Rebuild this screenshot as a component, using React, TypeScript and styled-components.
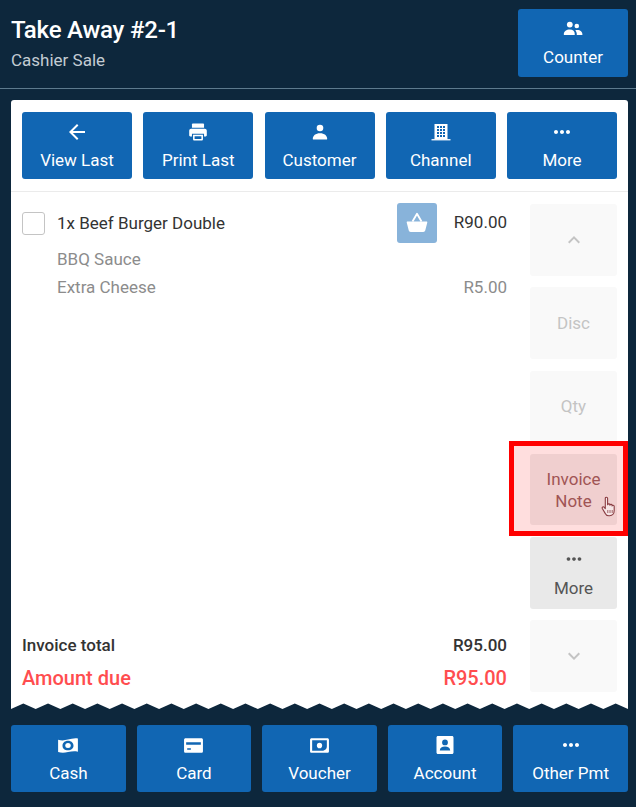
import type { ReactNode } from 'react';
import styled, { createGlobalStyle } from 'styled-components';
import { MdArrowBack, MdMoreHoriz, MdKeyboardArrowUp, MdKeyboardArrowDown } from 'react-icons/md';

const GlobalStyle = createGlobalStyle`
  html, body {
    margin: 0;
    padding: 0;
    background: #0d273c;
  }
  * {
    box-sizing: border-box;
  }
`;

const PeopleIcon = () => (
  <svg width="20" height="20" viewBox="0 0 20 20" fill="currentColor">
    <circle cx="6.8" cy="5.6" r="2.9" />
    <circle cx="13.8" cy="7" r="2.3" />
    <path d="M.8 15.4c0-3 2.700-4.900 6-4.900s5 1.900 5 4.900c0 .4-.3.6-.6.6H1.400c-.3 0-.6-.2-.6-.6z" />
    <path d="M13 16h6c.3 0 .5-.2.5-.5 0-2.700-2.100-4.600-5.100-4.600-.8 0-1.500.2-2.100.4 1 1.100 1.500 2.600 1.500 4.200 0 .2 0 .3-.1.5z" />
  </svg>
);

const PrintIcon = () => (
  <svg width="22" height="22" viewBox="0 0 20 20" fill="currentColor">
    <path d="M5.500 2.200h9c.6 0 1 .4 1 1v2.900h-11V3.200c0-.6.400-1 1-1z" />
    <path d="M3.800 7h12.400c1 0 1.800.8 1.800 1.800v4.200c0 .6-.4 1-1 1h-1.500v-2.500h-11V14H3c-.6 0-1-.4-1-1V8.800C2 7.800 2.800 7 3.800 7z" />
    <path fillRule="evenodd" d="M5.500 12.500h9v4c0 .7-.5 1.200-1.200 1.200H6.700c-.7 0-1.200-.5-1.200-1.200v-4zm1.400 1.300v2.600h6.200v-2.600H6.900z" />
  </svg>
);

const PersonIcon = () => (
  <svg width="20" height="20" viewBox="0 0 20 20" fill="currentColor">
    <circle cx="10" cy="6" r="3.300" />
    <path d="M2.800 17c0-3.400 2.800-5.800 7.200-5.800s7.200 2.400 7.200 5.800c0 .4-.3.600-.6.600H3.400c-.3 0-.6-.2-.6-.6z" />
  </svg>
);

const windowColumns = [6, 9, 12];
const windowRows = [4, 7, 10, 13];

const BuildingIcon = () => (
  <svg width="20" height="20" viewBox="0 0 20 20" fill="currentColor">
    <path d="M.5 17.100h19v1.300H.5z" />
    <path d="M3.500 2h13v15.500h-13z" />
    {windowRows.map((y) =>
      windowColumns.map((x) => <rect key={`${x}-${y}`} x={x} y={y} width="2" height="2" fill="#1166b3" />),
    )}
  </svg>
);

const CashIcon = () => (
  <svg width="22" height="22" viewBox="0 0 20 20" fill="currentColor" fillRule="evenodd">
    <path d="M1 5.200c3 .9 5.500.8 9-.1 3-.8 6-1.500 9-1v12c-3-.7-5.500-.4-9 .3-3.300.7-6.200.8-9-.1V5.200zm9 .9c-3 0-5 2-5 4.500s2 4.200 5 4.200 5-1.800 5-4.200-2-4.500-5-4.500z" />
    <ellipse cx="10" cy="10.500" rx="2.500" ry="2.300" />
  </svg>
);

const CardIcon = () => (
  <svg width="21" height="21" viewBox="0 0 20 20" fill="currentColor" fillRule="evenodd">
    <path d="M2.500 3h15C18.400 3 19 3.600 19 4.500v11c0 .9-.6 1.500-1.500 1.500h-15C1.600 17 1 16.400 1 15.500v-11C1 3.600 1.600 3 2.500 3zM3 7v2.300h14V7H3zm1 5.600v1.400h3.500v-1.400H4z" />
  </svg>
);

const VoucherIcon = () => (
  <svg width="21" height="21" viewBox="0 0 20 20" fill="currentColor" fillRule="evenodd">
    <path d="M2.500 3h15c.9 0 1.500.6 1.500 1.500v11c0 .9-.6 1.500-1.500 1.500h-15C1.600 17 1 16.400 1 15.500v-11C1 3.600 1.600 3 2.500 3zM3 5v10h10.500c2.200-.5 3.500-2 3.500-4V5H3z" />
    <ellipse cx="10" cy="10" rx="2.500" ry="2.700" />
  </svg>
);

const AccountIcon = () => (
  <svg width="20" height="20" viewBox="0 0 20 20" fill="currentColor" fillRule="evenodd">
    <path d="M3 1h14c.9 0 1.500.6 1.500 1.500v15c0 .9-.6 1.500-1.500 1.500H3c-.9 0-1.500-.6-1.500-1.500v-15C1.500 1.600 2.100 1 3 1zm7 3.500a2.900 2.900 0 100 5.800 2.900 2.900 0 000-5.800zM4.800 15.500h10.400c0-2.500-2.200-3.900-5.200-3.900s-5.200 1.400-5.200 3.900z" />
  </svg>
);

const BasketIcon = () => (
  <svg width="24" height="24" viewBox="0 0 24 24" fill="#fff">
    <path d="M2.500 10.500h19c.6 0 .9.500.8 1l-2 7.800c-.3 1-1 1.600-2 1.600H5.700c-1 0-1.700-.6-2-1.600l-2-7.800c-.1-.5.2-1 .8-1z" />
    <path d="M7.500 10.500L12 2.800l4.500 7.700" fill="none" stroke="#fff" strokeWidth="1.800" strokeLinejoin="round" />
  </svg>
);

const HandCursor = () => (
  <svg width="16" height="22" viewBox="0 0 16 22" fill="#f6e6e6" stroke="#8a3c42" strokeWidth="1.100" strokeLinejoin="round">
    <path d="M4.300 2.300c0-1.500 2.300-1.500 2.300 0v6.500c.1-1.300 2.200-1.300 2.300 0v.5c.1-1.200 2.100-1.200 2.200 0v.7c.2-1.100 2-1 2.100.2v4.400c0 2.700-1.600 5.200-4.600 5.200H7.800c-1.800 0-2.900-1-3.600-2.400L1.300 12.500c-.6-1.300 1.100-2.300 2-1.200l1 1.300V2.300z" />
    <path d="M6.800 14v3M9 14v3M11.200 14v3" fill="none" strokeWidth="0.800" />
  </svg>
);

function ActionButton({ icon, label }: { icon: ReactNode; label: string }) {
  return (
    <BlueButton>
      <IconSlot>{icon}</IconSlot>
      <span>{label}</span>
    </BlueButton>
  );
}

const receiptWidth = 617;
const teeth = 25;
const toothWidth = receiptWidth / teeth;
const zigzagPath =
  `M0 0 L${receiptWidth} 0 ` +
  Array.from({ length: teeth }, (_, i) => {
    const right = receiptWidth - i * toothWidth;
    return `L${right} 6 L${right - toothWidth / 2} 0.5`;
  }).join(' ') +
  ' L0 6 Z';

export default function App() {
  return (
    <Page>
      <GlobalStyle />
      <Header>
        <div>
          <Title>Take Away #2-1</Title>
          <Subtitle>Cashier Sale</Subtitle>
        </div>
        <CounterButton>
          <IconSlot><PeopleIcon /></IconSlot>
          <span>Counter</span>
        </CounterButton>
      </Header>

      <Card>
        <Toolbar>
          <ActionButton icon={<MdArrowBack size={24} />} label="View Last" />
          <ActionButton icon={<PrintIcon />} label="Print Last" />
          <ActionButton icon={<PersonIcon />} label="Customer" />
          <ActionButton icon={<BuildingIcon />} label="Channel" />
          <ActionButton icon={<MdMoreHoriz size={24} />} label="More" />
        </Toolbar>

        <Body>
          <Invoice>
            <ItemRow>
              <Checkbox />
              <ItemName>1x Beef Burger Double</ItemName>
              <BasketButton><BasketIcon /></BasketButton>
              <ItemPrice>R90.00</ItemPrice>
            </ItemRow>
            <Modifier><span>BBQ Sauce</span></Modifier>
            <Modifier><span>Extra Cheese</span><span>R5.00</span></Modifier>
            <Totals>
              <TotalRow><span>Invoice total</span><span>R95.00</span></TotalRow>
              <DueRow><span>Amount due</span><span>R95.00</span></DueRow>
            </Totals>
          </Invoice>

          <SideColumn>
            <SideButton><MdKeyboardArrowUp size={24} /></SideButton>
            <SideButton>Disc</SideButton>
            <SideButton>Qty</SideButton>
            <SideButton $active>
              Invoice<br />Note
              <Highlight />
              <CursorSpot><HandCursor /></CursorSpot>
            </SideButton>
            <SideButton $dark>
              <MdMoreHoriz size={22} />
              <MoreLabel>More</MoreLabel>
            </SideButton>
            <SideButton><MdKeyboardArrowDown size={24} /></SideButton>
          </SideColumn>
        </Body>
      </Card>
      <Zigzag viewBox={`0 0 ${receiptWidth} 6`} preserveAspectRatio="none">
        <path d={zigzagPath} fill="#fff" />
      </Zigzag>

      <PaymentBar>
        <ActionButton icon={<CashIcon />} label="Cash" />
        <ActionButton icon={<CardIcon />} label="Card" />
        <ActionButton icon={<VoucherIcon />} label="Voucher" />
        <ActionButton icon={<AccountIcon />} label="Account" />
        <ActionButton icon={<MdMoreHoriz size={24} />} label="Other Pmt" />
      </PaymentBar>
    </Page>
  );
}

const Page = styled.div`
  width: 636px;
  height: 807px;
  overflow: hidden;
  display: flex;
  flex-direction: column;
  background: #0d273c;
  font-family: Roboto, 'Liberation Sans', sans-serif;
  font-size: 17px;
`;

const Header = styled.header`
  height: 89px;
  flex-shrink: 0;
  padding: 9px 8px 0 11px;
  display: flex;
  justify-content: space-between;
  align-items: flex-start;
  border-bottom: 1px solid #5d7a8d;
`;

const Title = styled.div`
  margin-top: 6px;
  font-size: 24px;
  line-height: 30px;
  font-weight: 500;
  letter-spacing: -0.2px;
  color: #fff;
`;

const Subtitle = styled.div`
  margin-top: 5px;
  font-size: 17px;
  line-height: 20px;
  color: #c3ccd3;
`;

const BlueButton = styled.button`
  height: 67px;
  padding: 0;
  border: 0;
  border-radius: 3px;
  background: #1166b3;
  color: #fff;
  font: inherit;
  line-height: 20px;
  display: flex;
  flex-direction: column;
  align-items: center;
  justify-content: flex-start;
`;

const CounterButton = styled(BlueButton)`
  width: 110px;
  height: 68px;
`;

const IconSlot = styled.span`
  height: 24px;
  margin: 8px 0 6px;
  display: flex;
  align-items: center;
  justify-content: center;
`;

const Card = styled.section`
  margin: 11px 8px 0 11px;
  height: 603px;
  flex-shrink: 0;
  background: #fff;
  border-radius: 3px 3px 0 0;
  display: flex;
  flex-direction: column;
`;

const Toolbar = styled.div`
  height: 92px;
  flex-shrink: 0;
  padding: 12px 11px;
  display: grid;
  grid-template-columns: repeat(5, 1fr);
  gap: 11.25px;
  border-bottom: 1px solid #ebebeb;
`;

const Body = styled.div`
  flex: 1;
  min-height: 0;
  padding: 12px 11px 11px;
  display: flex;
  gap: 23px;
`;

const Invoice = styled.div`
  flex: 1;
  min-width: 0;
  display: flex;
  flex-direction: column;
`;

const ItemRow = styled.div`
  height: 40px;
  margin-top: -1px;
  display: flex;
  align-items: center;
  color: #333;
`;

const Checkbox = styled.span`
  width: 23px;
  height: 23px;
  margin-right: 12px;
  border: 1px solid #c4c4c4;
  border-radius: 3px;
`;

const ItemName = styled.span`
  flex: 1;
`;

const BasketButton = styled.span`
  width: 40px;
  height: 40px;
  border-radius: 3px;
  background: #88b3da;
  display: flex;
  align-items: center;
  justify-content: center;
`;

const ItemPrice = styled.span`
  width: 70px;
  margin-top: -3px;
  align-self: center;
  text-align: right;
`;

const Modifier = styled.div`
  height: 28px;
  padding-left: 35px;
  display: flex;
  align-items: center;
  justify-content: space-between;
  color: #8c8c8c;

  &:nth-child(2) {
    margin-top: 2px;
  }
`;

const Totals = styled.div`
  margin-top: auto;
  display: flex;
  flex-direction: column;
  gap: 4px;
`;

const TotalRow = styled.div`
  height: 30px;
  display: flex;
  align-items: center;
  justify-content: space-between;
  font-weight: 500;
  color: #333;
`;

const DueRow = styled(TotalRow)`
  height: 28px;
  font-size: 20px;
  color: #ff4d4f;
`;

const SideColumn = styled.div`
  width: 87px;
  flex-shrink: 0;
  display: grid;
  grid-template-rows: repeat(6, 1fr);
  gap: 11.6px;
`;

const SideButton = styled.div<{ $active?: boolean; $dark?: boolean }>`
  position: relative;
  border-radius: 3px;
  background: ${({ $active, $dark }) => ($active ? '#eeeeee' : $dark ? '#e9e9e9' : '#f9f9f9')};
  color: ${({ $active, $dark }) => ($active ? '#926262' : $dark ? '#555' : '#c4c4c4')};
  line-height: 22px;
  text-align: center;
  display: flex;
  flex-direction: column;
  align-items: center;
  justify-content: center;
`;

const MoreLabel = styled.span`
  margin-top: 8px;
  line-height: 20px;
`;

const Highlight = styled.span`
  position: absolute;
  top: -13px;
  right: -11px;
  bottom: -11px;
  left: -21px;
  border: 5px solid #ff0000;
  background: rgba(255, 0, 0, 0.13);
`;

const CursorSpot = styled.span`
  position: absolute;
  left: 71px;
  top: 42px;
  line-height: 0;
`;

const Zigzag = styled.svg`
  display: block;
  width: 617px;
  height: 6px;
  margin: 0 8px 0 11px;
  flex-shrink: 0;
`;

const PaymentBar = styled.div`
  margin: 16px 8px 0 11px;
  display: grid;
  grid-template-columns: repeat(5, 1fr);
  gap: 10.75px;
`;
